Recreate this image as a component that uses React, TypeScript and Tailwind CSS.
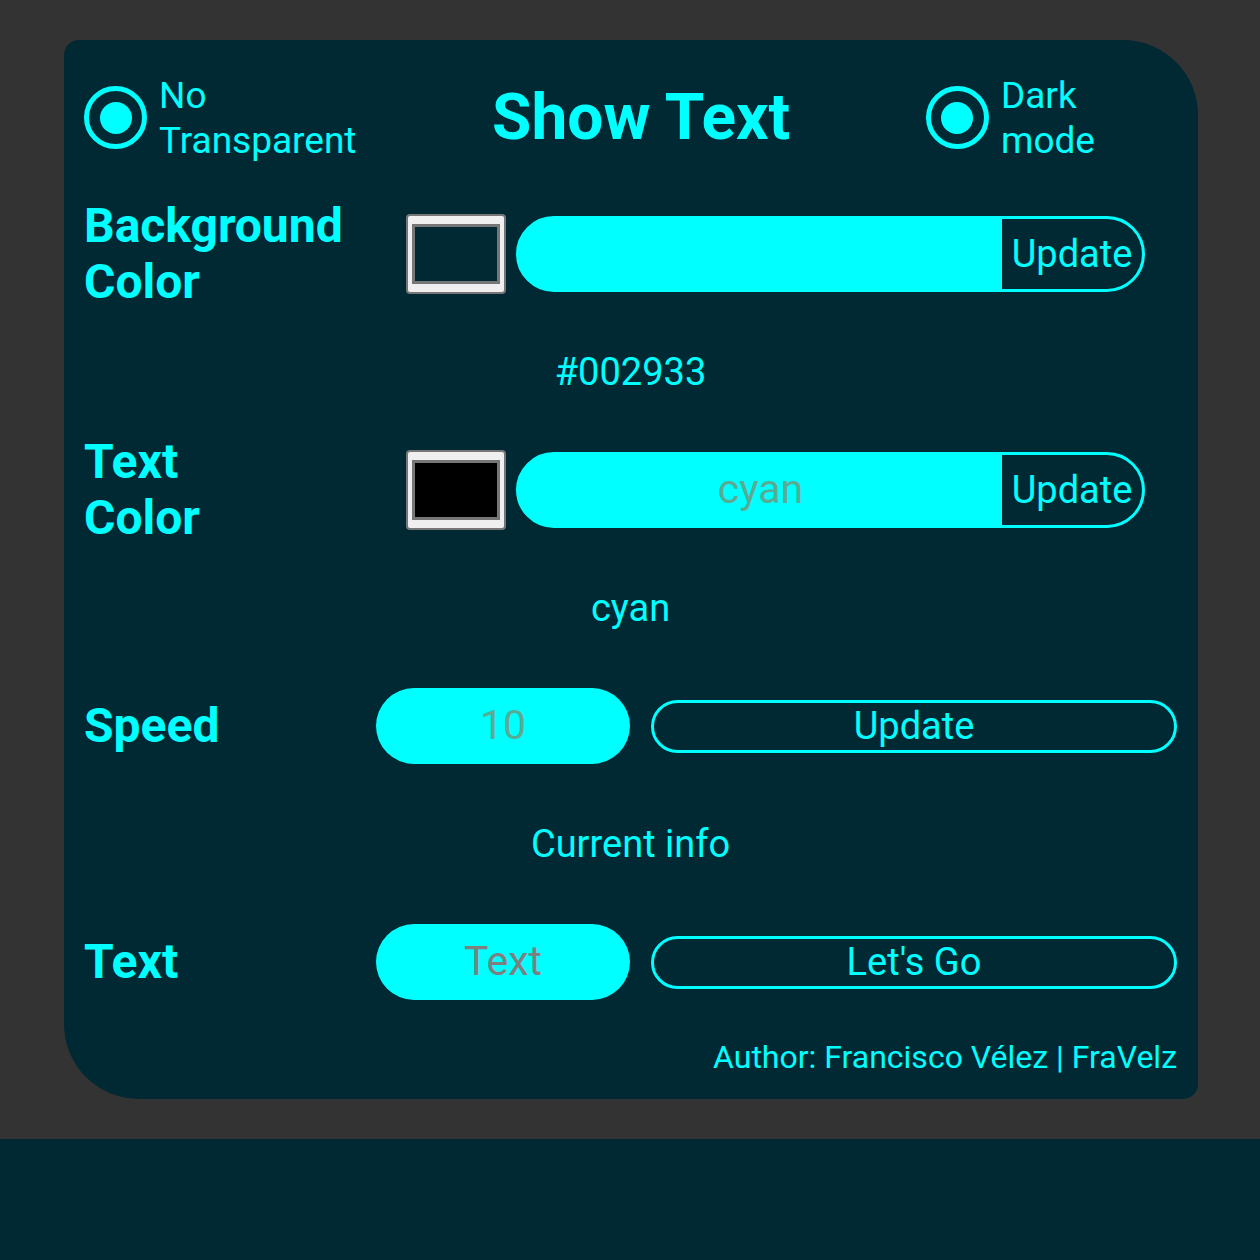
import React from 'react';

const font = { fontFamily: 'Roboto, "Noto Sans", sans-serif' };

const Radio: React.FC<{ label: [string, string] }> = ({ label }) => (
  <div className="flex items-center gap-[12px]">
    <div className="w-[63px] h-[63px] rounded-full border-[5px] border-[#00ffff] flex items-center justify-center">
      <div className="w-[32px] h-[32px] rounded-full bg-[#00ffff]" />
    </div>
    <div className="text-[37px] leading-[45px] text-[#00ffff]">
      {label[0]}
      <br />
      {label[1]}
    </div>
  </div>
);

const Swatch: React.FC<{ color: string }> = ({ color }) => (
  <div className="w-[100px] h-[80px] shrink-0 rounded-[4px] border-2 border-[#767676] bg-[#efefef] px-[4px] py-[8px]">
    <div className="w-full h-full border-[3px] border-[#767676]" style={{ backgroundColor: color }} />
  </div>
);

const ColorRow: React.FC<{ label: [string, string]; swatch: string; value: string }> = ({ label, swatch, value }) => (
  <div className="h-[118px] flex items-center">
    <div className="w-[322px] shrink-0 text-[48px] font-bold leading-[56px] text-[#00ffff]">
      {label[0]}
      <br />
      {label[1]}
    </div>
    <Swatch color={swatch} />
    <div className="ml-[10px] w-[629px] h-[76px] rounded-full border-[3px] border-[#00ffff] bg-[#00ffff] overflow-hidden flex">
      <div className="flex-1 flex items-center justify-center text-[41px] text-[#5aab93]">{value}</div>
      <button className="w-[140px] bg-[#002933] text-[38px] text-[#00ffff]">Update</button>
    </div>
  </div>
);

const InfoLine: React.FC<{ text: string }> = ({ text }) => (
  <div className="h-[118px] flex items-center justify-center text-[38px] text-[#00ffff]">{text}</div>
);

const ActionRow: React.FC<{ label: string; value: string; valueColor: string; action: string }> = ({
  label,
  value,
  valueColor,
  action,
}) => (
  <div className="h-[118px] flex items-center">
    <div className="w-[292px] shrink-0 text-[48px] font-bold leading-[56px] text-[#00ffff]">{label}</div>
    <div className={`w-[254px] h-[76px] rounded-full bg-[#00ffff] flex items-center justify-center text-[41px] ${valueColor}`}>
      {value}
    </div>
    <button className="ml-[21px] flex-1 h-[53px] rounded-full border-[3px] border-[#00ffff] text-[38px] leading-[44px] text-[#00ffff]">
      {action}
    </button>
  </div>
);

export default function App() {
  return (
    <div className="min-h-screen bg-[#002933]" style={font}>
      <div className="bg-[#333333] pl-[64px] pr-[62px] py-[40px]">
        <div className="bg-[#002933] rounded-tl-[15px] rounded-br-[15px] rounded-tr-[75px] rounded-bl-[75px] pl-[20px] pr-[21px]">
          <div className="h-[155px] grid grid-cols-[auto_1fr_auto] items-center pr-[82px]">
            <Radio label={['No', 'Transparent']} />
            <h1 className="text-center text-[64px] font-bold text-[#00ffff]">Show Text</h1>
            <Radio label={['Dark', 'mode']} />
          </div>

          <ColorRow label={['Background', 'Color']} swatch="#002933" value="" />
          <InfoLine text="#002933" />
          <ColorRow label={['Text', 'Color']} swatch="#000000" value="cyan" />
          <InfoLine text="cyan" />
          <ActionRow label="Speed" value="10" valueColor="text-[#5aab93]" action="Update" />
          <InfoLine text="Current info" />
          <ActionRow label="Text" value="Text" valueColor="text-[#7f7f7f]" action="Let's Go" />

          <div className="pt-[18px] pb-[23px] text-right text-[32px] leading-[37px] text-[#00ffff]">
            Author: Francisco Vélez | FraVelz
          </div>
        </div>
      </div>
    </div>
  );
}
